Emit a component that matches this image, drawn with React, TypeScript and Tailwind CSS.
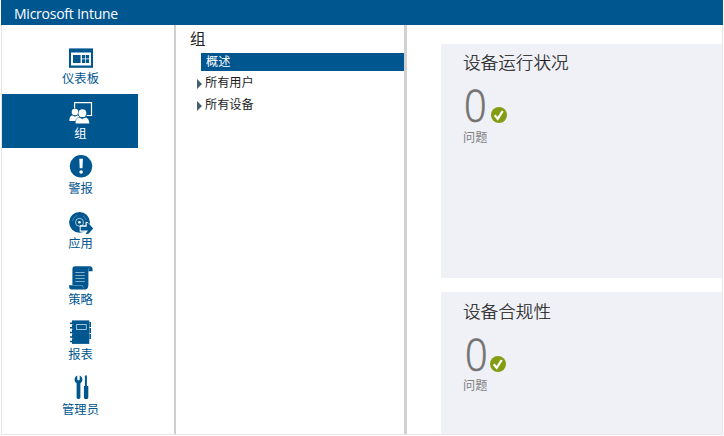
import type { ReactNode } from "react";

const BLUE = "#00568f";

type IconProps = { children: ReactNode };

function Icon({ children }: IconProps) {
  return (
    <svg width="24" height="25" viewBox="0 0 24 25" className="block shrink-0">
      {children}
    </svg>
  );
}

const DashboardIcon = () => (
  <Icon>
    <path fill={BLUE} d="M0 3.4h24v19.4H0z" />
    <path fill="#fff" d="M2 7.500h20v13H2z" />
    <path fill={BLUE} d="M4 10h7.600v8H4zM13 10h3.200v3.600H13zM16.900 10h3.200v3.600h-3.200zM13 14.300h3.200V18H13zM16.900 14.300h3.200V18h-3.200z" />
  </Icon>
);

const GroupsIcon = () => (
  <Icon>
    <path fill="none" stroke="#fff" strokeWidth="1.2" d="M5.600 8.500V2.600h16.900v12.900H17.500" />
    <g fill="#fff">
      <circle cx="6" cy="12" r="3.300" />
      <path d="M.3 21c0-3.800 1.400-5.500 3.400-5.500l2.300 1.200 2.300-1.200c.9 0 1.700.5 2.200 1.300L9 21z" />
    </g>
    <circle cx="13.400" cy="13.200" r="4.500" fill={BLUE} />
    <circle cx="13.400" cy="13.200" r="3.900" fill="#fff" />
    <path
      fill="#fff"
      stroke={BLUE}
      strokeWidth=".5"
      d="M6.300 23.800c0-4 1.500-6.400 4.300-6.400l2.800 1.400 2.800-1.400c2.800 0 4.300 2.400 4.300 6.400z"
    />
  </Icon>
);

const AlertsIcon = () => (
  <Icon>
    <circle cx="12" cy="11.300" r="11.200" fill={BLUE} />
    <path fill="#fff" d="M10.300 3.800h3.600l-.4 9.400h-2.800z" />
    <circle cx="12.100" cy="17" r="1.800" fill="#fff" />
  </Icon>
);

const AppsIcon = () => (
  <Icon>
    <circle cx="10.500" cy="12.300" r="10.400" fill={BLUE} />
    <circle cx="10.500" cy="12.300" r="4" fill="none" stroke="#fff" strokeWidth=".8" opacity=".8" />
    <circle cx="10.500" cy="12.300" r="1.300" fill="#fff" />
    <path
      fill="none"
      stroke="#fff"
      strokeWidth=".8"
      d="M3.500 11c.5-2.700 2.200-4.700 4.700-5.500M17 10c-.6-1.900-1.600-3.200-3-4.200"
      opacity=".35"
    />
    <path fill="#fff" d="M10.700 15.300h5.800v-3l1.500-.6 4 3.600v8h-5.500v-1.600h-5.800z" />
    <path fill={BLUE} d="M11.700 16.800h6v-3.800h1.500l5 5.500-5 5.500h-2.600l2.300-3.600h-7.200z" />
  </Icon>
);

const PolicyIcon = () => (
  <Icon>
    <path
      fill={BLUE}
      d="M6 1.200h15c1.700 0 2.600 1.400 2.600 3.600v1.400h-4.200v13.200c0 3.300-1.100 5.100-3.300 5.100H2.500C.8 24.500 0 22.900 0 20.200h3.400V4.400c0-2 1-3.200 2.600-3.200z"
    />
    <path
      fill="none"
      stroke="#fff"
      strokeWidth=".7"
      d="M6.400 7.500h9.300M6.400 10.500h9.300M6.400 13.500h9.300M6.400 16.500h9.300"
      opacity=".75"
    />
    <path fill="none" stroke="#fff" strokeWidth=".6" d="M3.500 20.500h10.200c0 1.500.3 2.200 1.200 2.600M19.400 6V4.500c0-.9.500-1.500 1.200-1.500" opacity=".5" />
  </Icon>
);

const ReportsIcon = () => (
  <Icon>
    <path fill={BLUE} d="M3 .4h17.300v23.500H3z" />
    <path stroke={BLUE} strokeWidth="1.500" d="M1 3.200h3M1 7.800h3M1 12.400h3M1 17h3M1 21.400h3" />
    <path stroke="#fff" strokeWidth=".5" d="M3 4.600h1.500M3 9.200h1.500M3 13.800h1.500M3 18.400h1.500" opacity=".6" />
    <path stroke={BLUE} strokeWidth="1.600" d="M21.200 2v5M21.200 8v5M21.200 14v5" />
    <path fill="none" stroke="#fff" strokeWidth=".8" d="M7.500 4.500h9.800v5H7.500z" opacity=".8" />
  </Icon>
);

const AdminIcon = () => (
  <Icon>
    <path
      fill={BLUE}
      d="M8.300.4v4.300l1.200.9 1.200-.9V.4c1.700.8 2.700 2.300 2.700 4 0 1.600-.8 3-2 3.800v13.700c0 1.300-.8 2.100-1.900 2.100s-1.900-.8-1.900-2.100V8.200c-1.300-.8-2-2.200-2-3.800 0-1.700.9-3.200 2.700-4z"
    />
    <path
      fill={BLUE}
      d="M15.900.5h2v10.600h1.400v11.300c0 1-.8 1.600-2.200 1.600s-2.200-.6-2.200-1.600V11.100h1z"
    />
  </Icon>
);

const navItems = [
  { label: "仪表板", icon: <DashboardIcon /> },
  { label: "组", icon: <GroupsIcon />, active: true },
  { label: "警报", icon: <AlertsIcon /> },
  { label: "应用", icon: <AppsIcon /> },
  { label: "策略", icon: <PolicyIcon />, low: true },
  { label: "报表", icon: <ReportsIcon />, low: true },
  { label: "管理员", icon: <AdminIcon />, low: true },
];

function Sidebar() {
  return (
    <nav className="w-[172px] shrink-0 pt-[14px]">
      {navItems.map((item) => (
        <div key={item.label} className="h-[55px]">
          <div
            className={
              item.active
                ? "flex h-[54px] w-[136px] flex-col items-center bg-[#00568f] pt-[6px] pl-[22px] text-white"
                : "flex h-[54px] w-[136px] flex-col items-center pt-[6px] pl-[22px] text-[#00568f]"
            }
          >
            {item.icon}
            <span
              className={
                item.low
                  ? "mt-px mr-px h-[16px] text-[12.300px] leading-[17px] whitespace-nowrap"
                  : "mr-px h-[16px] text-[12.300px] leading-[17px] whitespace-nowrap"
              }
            >
              {item.label}
            </span>
          </div>
        </div>
      ))}
    </nav>
  );
}

function TreeItem({ label }: { label: string }) {
  return (
    <li className="flex h-[22px] items-center pl-[21px]">
      <svg width="5" height="10" viewBox="0 0 5 10" className="mt-px mr-[3px] shrink-0">
        <path d="M0 0 5 5 0 10z" fill="#44606e" />
      </svg>
      <span className="text-[12.200px] text-[#1c1c1c]">{label}</span>
    </li>
  );
}

function GroupTree() {
  return (
    <section className="w-[228px] shrink-0">
      <h2 className="h-[28px] pl-[14px] text-[15.500px] leading-[28px] text-[#222]">组</h2>
      <div className="ml-[25px] flex h-[18px] items-center bg-[#00568f] pl-[5px] text-[12.200px] text-white">
        概述
      </div>
      <ul className="pt-[1px]">
        <TreeItem label="所有用户" />
        <TreeItem label="所有设备" />
      </ul>
    </section>
  );
}

function StatusCard({ title, shifted }: { title: string; shifted?: boolean }) {
  return (
    <article className="h-[234px] shrink-0 bg-[#f0f1f7] pl-[22px]">
      <h3
        className={
          shifted
            ? "h-[38px] text-[17.600px] leading-[39px] font-light text-[#1c1c1c] [-webkit-text-stroke:0.2px_#1c1c1c]"
            : "h-[38px] text-[17.600px] leading-[37px] font-light text-[#1c1c1c] [-webkit-text-stroke:0.2px_#1c1c1c]"
        }
      >
        {title}
      </h3>
      <div className={shifted ? "flex h-[46px] pl-[2px]" : "flex h-[46px] pl-px"}>
        <span
          className={
            shifted
              ? "w-[25px] origin-left scale-x-90 font-['Open_Sans'] text-[44px] leading-[48px] font-light text-[#737373] [-webkit-text-stroke:0.7px_#737373]"
              : "w-[25px] origin-left scale-x-90 font-['Open_Sans'] text-[44px] leading-[47px] font-light text-[#737373] [-webkit-text-stroke:0.7px_#737373]"
          }
        >
          0
        </span>
        <svg
          width="16"
          height="16"
          viewBox="0 0 16 16"
          className={shifted ? "mt-[26px]" : "mt-[25px] ml-[2px]"}
        >
          <circle cx="8" cy="8" r="8" fill="#839d13" />
          <path d="m3.700 8.300 3 3.500 5-7.800" fill="none" stroke="#fff" strokeWidth="2.300" />
        </svg>
      </div>
      <p className="pt-px text-[12.200px] leading-[18px] text-[#808080]">问题</p>
    </article>
  );
}

export default function App() {
  return (
    <div className="h-[436px] w-[724px] overflow-hidden bg-white pl-px font-['Open_Sans','Noto_Sans_CJK_SC',sans-serif]">
      <header className="h-[25px] w-[722px] bg-[#00568f] pl-[13px] text-[14px] leading-[28px] tracking-[-0.250px] text-white">
        Microsoft Intune
      </header>
      <div className="flex h-[410px] w-[722px] overflow-hidden border-r border-b border-l border-[#e6e6e9]">
        <Sidebar />
        <div className="w-[2px] shrink-0 bg-[#cfcfcf]" />
        <GroupTree />
        <div className="w-[3px] shrink-0 bg-[#d1d1d1]" />
        <main className="flex min-w-0 flex-1 flex-col gap-[14px] pt-[19px] pl-[34px]">
          <StatusCard title="设备运行状况" />
          <StatusCard title="设备合规性" shifted />
        </main>
      </div>
    </div>
  );
}
